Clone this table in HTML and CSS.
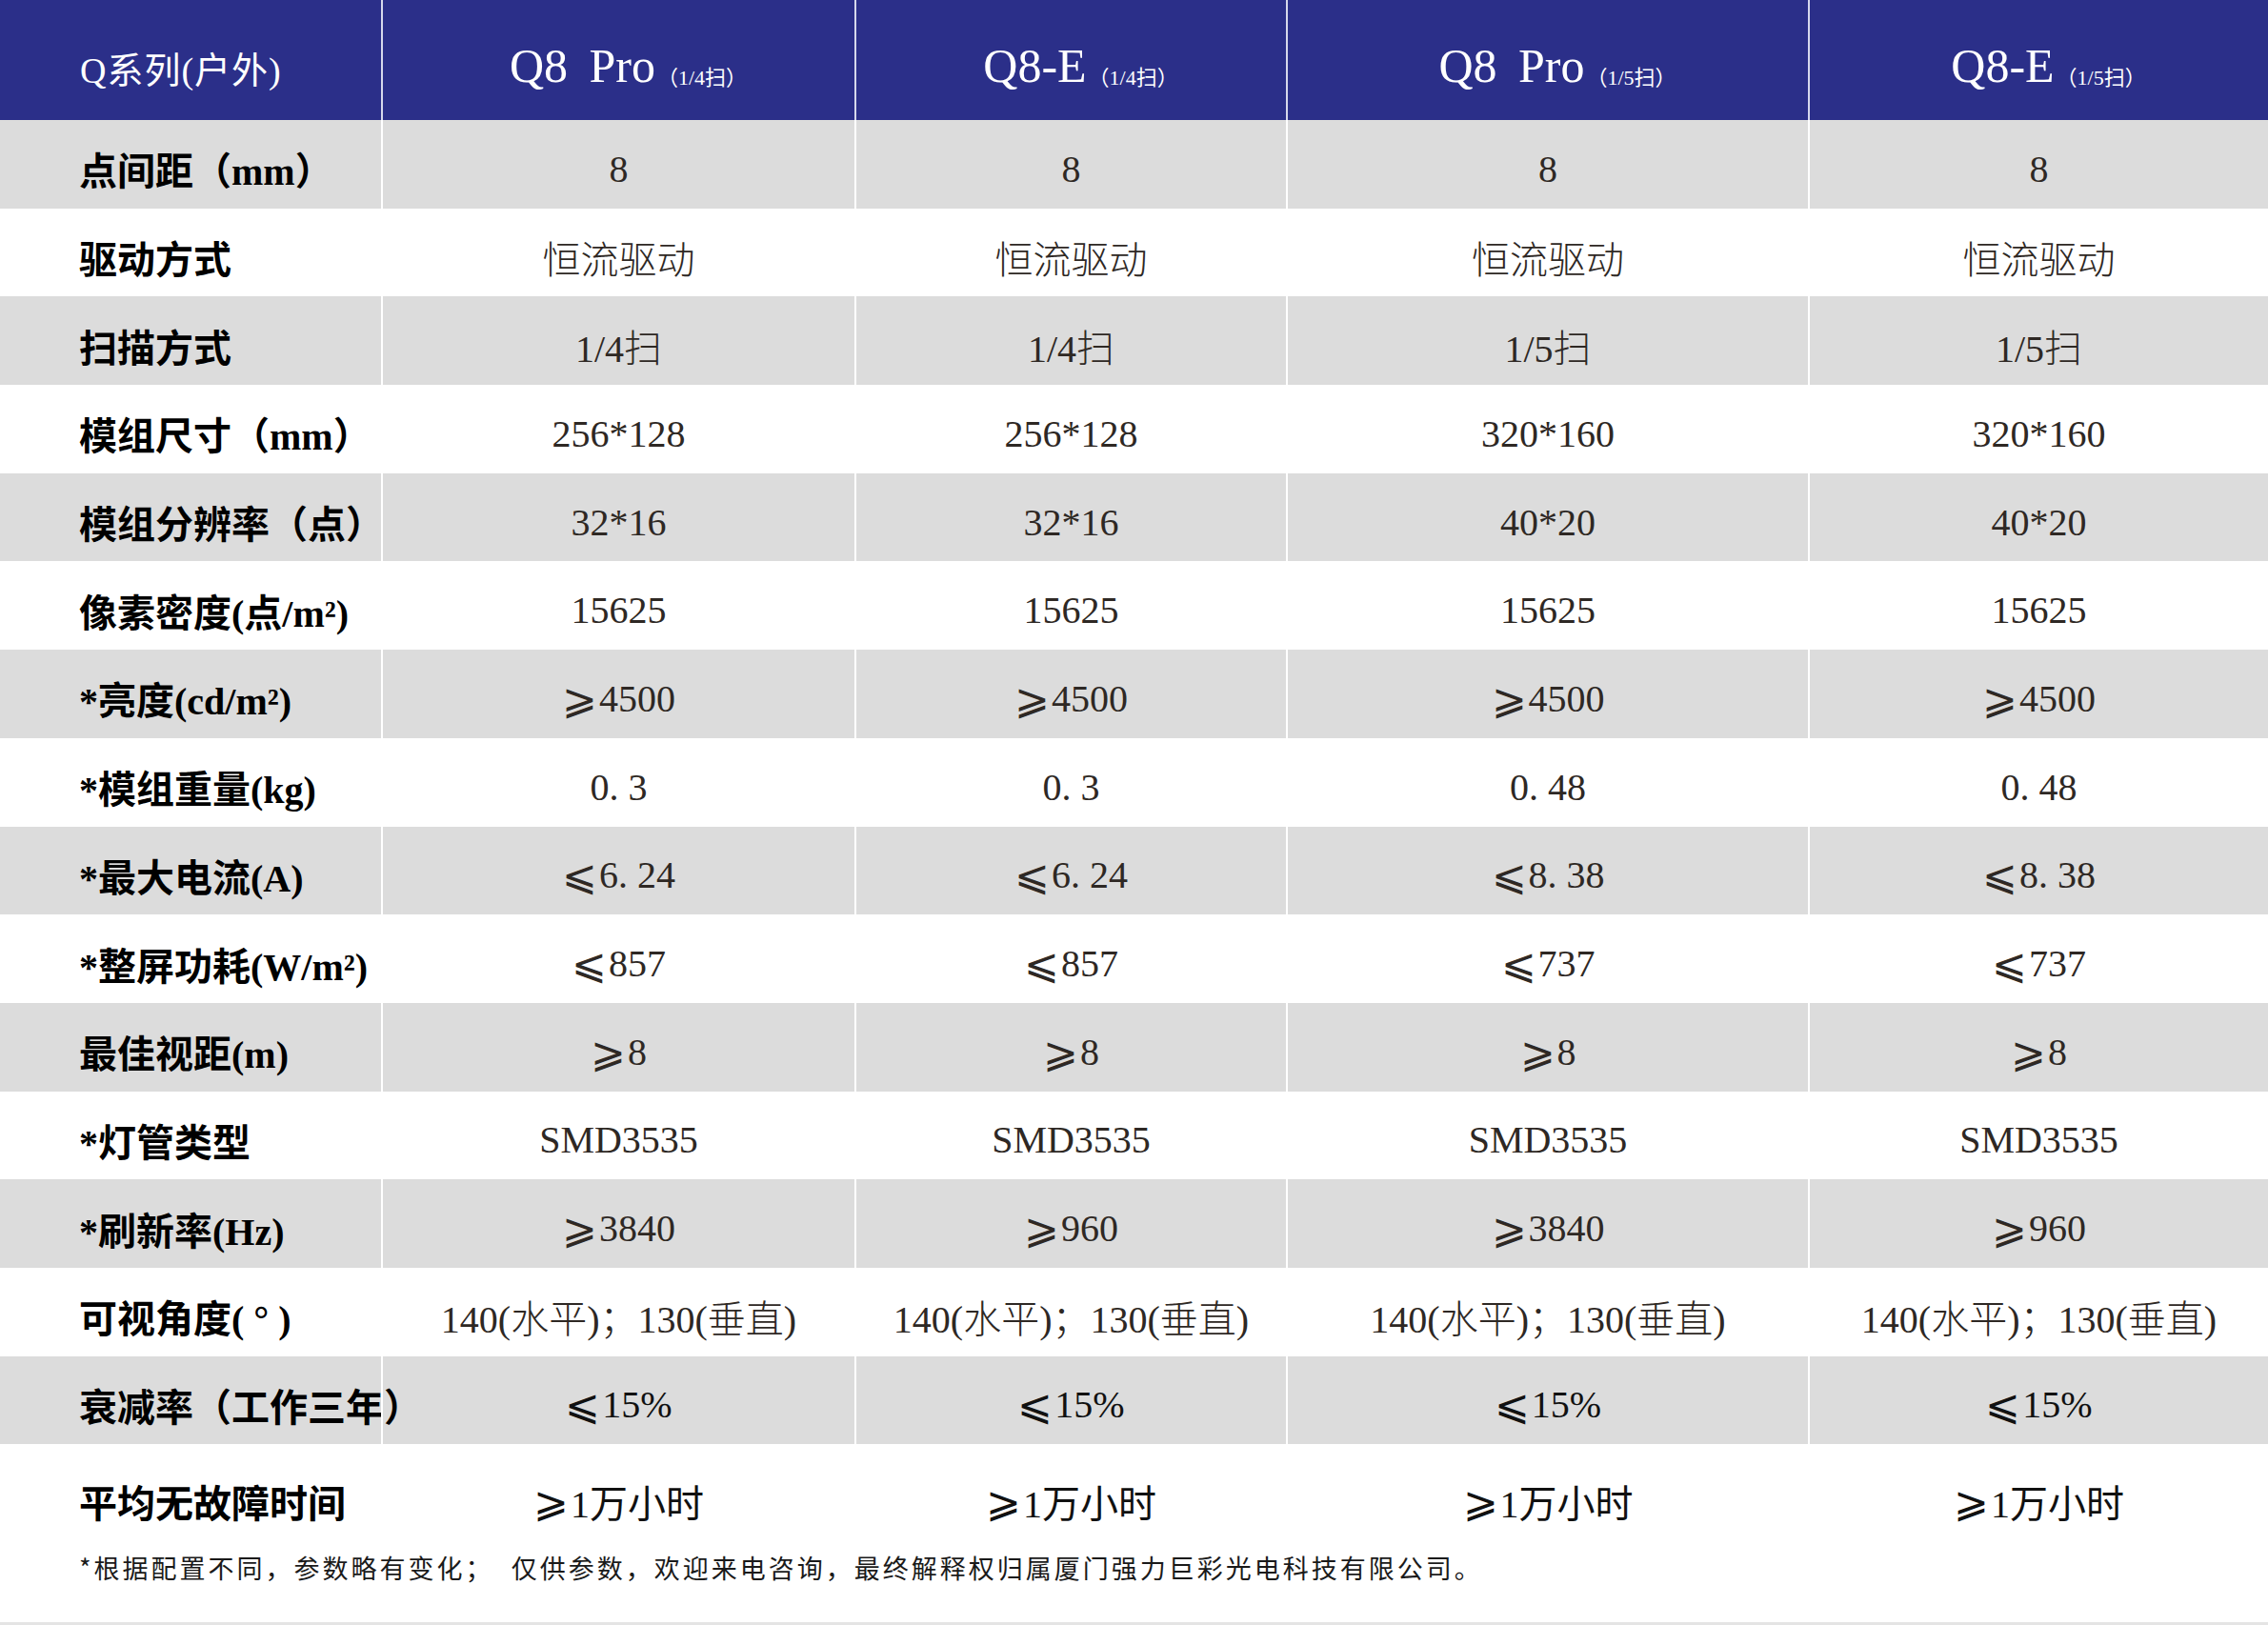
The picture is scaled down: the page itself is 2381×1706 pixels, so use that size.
FILE: index.html
```html
<!DOCTYPE html>
<html lang="zh-CN">
<head>
<meta charset="utf-8">
<title>Q系列(户外) 参数表</title>
<link rel="stylesheet" href="styles.css">
</head>
<body>
<div class="sheet">
  <div class="row head">
    <div class="cell label">Q系列(户外)</div>
    <div class="cell model">Q8 Pro<small>（1/4扫）</small></div>
    <div class="cell model">Q8-E<small>（1/4扫）</small></div>
    <div class="cell model">Q8 Pro<small>（1/5扫）</small></div>
    <div class="cell model">Q8-E<small>（1/5扫）</small></div>
  </div>
  <div class="row gray">
    <div class="cell label">点间距（mm）</div>
    <div class="cell val">8</div><div class="cell val">8</div><div class="cell val">8</div><div class="cell val">8</div>
  </div>
  <div class="row">
    <div class="cell label">驱动方式</div>
    <div class="cell val">恒流驱动</div><div class="cell val">恒流驱动</div><div class="cell val">恒流驱动</div><div class="cell val">恒流驱动</div>
  </div>
  <div class="row gray">
    <div class="cell label">扫描方式</div>
    <div class="cell val">1/4扫</div><div class="cell val">1/4扫</div><div class="cell val">1/5扫</div><div class="cell val">1/5扫</div>
  </div>
  <div class="row">
    <div class="cell label">模组尺寸<span class="thin">（mm）</span></div>
    <div class="cell val">256*128</div><div class="cell val">256*128</div><div class="cell val">320*160</div><div class="cell val">320*160</div>
  </div>
  <div class="row gray">
    <div class="cell label">模组分辨率（点）</div>
    <div class="cell val">32*16</div><div class="cell val">32*16</div><div class="cell val">40*20</div><div class="cell val">40*20</div>
  </div>
  <div class="row">
    <div class="cell label">像素密度(点/m²)</div>
    <div class="cell val">15625</div><div class="cell val">15625</div><div class="cell val">15625</div><div class="cell val">15625</div>
  </div>
  <div class="row gray">
    <div class="cell label">*亮度(cd/m²)</div>
    <div class="cell val"><span class="op">⩾</span>4500</div><div class="cell val"><span class="op">⩾</span>4500</div><div class="cell val"><span class="op">⩾</span>4500</div><div class="cell val"><span class="op">⩾</span>4500</div>
  </div>
  <div class="row">
    <div class="cell label">*模组重量(kg)</div>
    <div class="cell val">0. 3</div><div class="cell val">0. 3</div><div class="cell val">0. 48</div><div class="cell val">0. 48</div>
  </div>
  <div class="row gray">
    <div class="cell label">*最大电流(A)</div>
    <div class="cell val"><span class="op">⩽</span>6. 24</div><div class="cell val"><span class="op">⩽</span>6. 24</div><div class="cell val"><span class="op">⩽</span>8. 38</div><div class="cell val"><span class="op">⩽</span>8. 38</div>
  </div>
  <div class="row">
    <div class="cell label">*整屏功耗(W/m²)</div>
    <div class="cell val"><span class="op">⩽</span>857</div><div class="cell val"><span class="op">⩽</span>857</div><div class="cell val"><span class="op">⩽</span>737</div><div class="cell val"><span class="op">⩽</span>737</div>
  </div>
  <div class="row gray">
    <div class="cell label">最佳视距(m)</div>
    <div class="cell val"><span class="op">⩾</span>8</div><div class="cell val"><span class="op">⩾</span>8</div><div class="cell val"><span class="op">⩾</span>8</div><div class="cell val"><span class="op">⩾</span>8</div>
  </div>
  <div class="row">
    <div class="cell label">*灯管类型</div>
    <div class="cell val">SMD3535</div><div class="cell val">SMD3535</div><div class="cell val">SMD3535</div><div class="cell val">SMD3535</div>
  </div>
  <div class="row gray">
    <div class="cell label">*刷新率(Hz)</div>
    <div class="cell val"><span class="op">⩾</span>3840</div><div class="cell val"><span class="op">⩾</span>960</div><div class="cell val"><span class="op">⩾</span>3840</div><div class="cell val"><span class="op">⩾</span>960</div>
  </div>
  <div class="row">
    <div class="cell label">可视角度( ° )</div>
    <div class="cell val">140(水平)；130(垂直)</div><div class="cell val">140(水平)；130(垂直)</div><div class="cell val">140(水平)；130(垂直)</div><div class="cell val">140(水平)；130(垂直)</div>
  </div>
  <div class="row gray">
    <div class="cell label">衰减率（工作三年）</div>
    <div class="cell val dark"><span class="op">⩽</span>15%</div><div class="cell val dark"><span class="op">⩽</span>15%</div><div class="cell val dark"><span class="op">⩽</span>15%</div><div class="cell val dark"><span class="op">⩽</span>15%</div>
  </div>
  <div class="row last">
    <div class="cell label">平均无故障时间</div>
    <div class="cell val dark"><span class="op">⩾</span>1万小时</div><div class="cell val dark"><span class="op">⩾</span>1万小时</div><div class="cell val dark"><span class="op">⩾</span>1万小时</div><div class="cell val dark"><span class="op">⩾</span>1万小时</div>
  </div>
  <p class="note">*根据配置不同，参数略有变化；  仅供参数，欢迎来电咨询，最终解释权归属厦门强力巨彩光电科技有限公司。</p>
</div>
</body>
</html>
```

FILE: styles.css
```css
html, body {
  margin: 0;
  padding: 0;
  background: #ffffff;
}

.sheet {
  width: 2381px;
  height: 1706px;
  box-sizing: border-box;
  border-bottom: 3px solid #e4e4e4;
  background: #ffffff;
  overflow: hidden;
}

.row {
  display: grid;
  grid-template-columns: 400px 497px 453px 548px 483px;
  height: 92.7px;
  background: #ffffff;
}

.row.gray {
  background: #dcdcdc;
}

.row.head {
  height: 126px;
  background: #2b2f89;
}

.row.last {
  height: 110px;
}

.cell {
  display: flex;
  align-items: center;
  box-sizing: border-box;
  padding-top: 10px;
  white-space: nowrap;
}

.cell + .cell {
  justify-content: center;
  border-left: 2px solid #ffffff;
}

.head .cell + .cell {
  border-left-color: #d6d8ec;
}

.label {
  padding-left: 83px;
  font-family: "Liberation Serif", "Noto Sans CJK SC", serif;
  font-weight: 700;
  font-size: 40px;
  color: #000000;
}

.head .label {
  font-weight: 400;
  font-size: 38px;
  letter-spacing: 1px;
  color: #ffffff;
  padding-left: 84px;
  padding-top: 14px;
}

.model {
  font-family: "Liberation Serif", "Noto Sans CJK SC", serif;
  font-size: 50px;
  color: #ffffff;
  word-spacing: 10px;
  padding-top: 12px;
  padding-left: 20px;
}

.model small {
  font-size: 22px;
  margin-left: 2px;
  position: relative;
  top: 10px;
}

.val {
  font-family: "Liberation Serif", "Noto Sans CJK SC", "DejaVu Sans", serif;
  font-weight: 300;
  font-size: 40px;
  color: #2e2824;
}

.val.dark {
  color: #111111;
  font-weight: 400;
}

.op {
  font-family: "DejaVu Sans", "Noto Sans CJK SC", sans-serif;
  font-size: 44px;
  font-weight: 200;
  margin-right: 2px;
}

.note {
  margin: 0;
  padding-left: 83px;
  height: 40px;
  line-height: 40px;
  font-family: "Noto Sans CJK SC", sans-serif;
  font-size: 27px;
  letter-spacing: 3px;
  color: #1a1a1a;
  white-space: pre;
}
```
